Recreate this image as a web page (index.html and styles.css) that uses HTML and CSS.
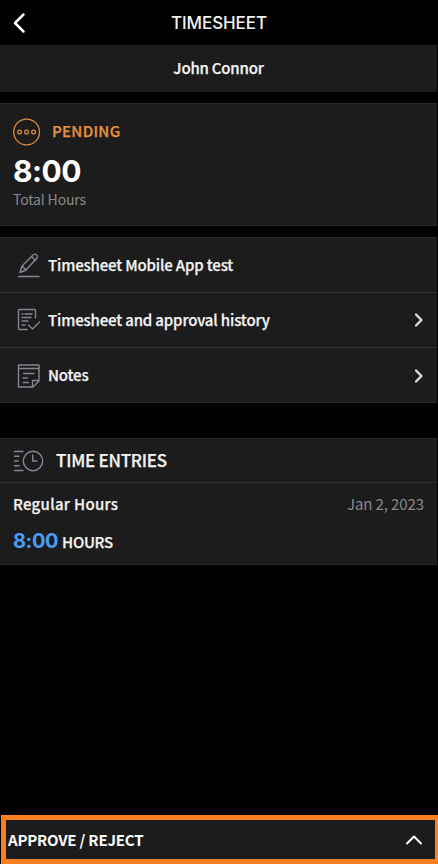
FILE: index.html
```html
<!DOCTYPE html>
<html lang="en">
<head>
<meta charset="utf-8">
<title>Timesheet</title>
<link rel="stylesheet" href="styles.css">
</head>
<body>
<div class="app">
  <header class="topbar">
    <svg class="back" width="14" height="22" viewBox="0 0 14 22"><path d="M11.500 2.500 3 11l8.500 8.500"/></svg>
    <h1 class="title">TIMESHEET</h1>
  </header>
  <div class="person">John Connor</div>
  <section class="card summary">
    <div class="status">
      <svg width="28" height="28" viewBox="0 0 28 28"><circle cx="13.600" cy="14" r="12.900"/><circle cx="6.600" cy="14" r="1.900"/><circle cx="13.600" cy="14" r="1.900"/><circle cx="20.600" cy="14" r="1.900"/></svg>
      <span class="pending">PENDING</span>
    </div>
    <div class="total">8:00</div>
    <div class="caption">Total Hours</div>
  </section>
  <nav class="card menu">
    <div class="row">
      <svg class="icon" width="24" height="26" viewBox="0 0 24 26"><path d="M1.500 24.500h20.500M3 20.500l2-6.500L16.500 2.500q1.500-1 3 .5t.5 3L9 18l-6 2.500zM5 14l4 4M14.500 4.500l4 4"/></svg>
      <span class="label l1">Timesheet Mobile App test</span>
    </div>
    <div class="row">
      <svg class="icon" width="24" height="26" viewBox="0 0 24 26"><path d="M10 22.500H2.500q-1 0-1-1v-18q0-1 1-1h15q1 0 1 1V11M5 7h1M8 7h7M5 10.500h9M5 14h6M5 18h3M11.500 18l4 4 7-7"/></svg>
      <span class="label l2">Timesheet and approval history</span>
      <svg class="chev" width="10" height="14" viewBox="0 0 10 14"><path d="m2 1.500 5.500 5.500L2 12.500"/></svg>
    </div>
    <div class="row">
      <svg class="icon" width="24" height="26" viewBox="0 0 24 26"><path d="M1.500 2h20.500v16l-6 6H1.500zM1.500 5.500H22M15.500 24v-6.500H22M6.500 10.500H17M6 15h4.500M6 19.500h5.500"/></svg>
      <span class="label l3">Notes</span>
      <svg class="chev" width="10" height="14" viewBox="0 0 10 14"><path d="m2 1.500 5.500 5.500L2 12.500"/></svg>
    </div>
  </nav>
  <section class="card entries">
    <div class="entries-head">
      <svg class="icon" width="32" height="24" viewBox="0 0 32 24"><circle cx="20" cy="12" r="9.700"/><path d="M19.700 6v6h4.300M1.500 2.500h8.500M1.500 7.200H6M1.500 12H5M1.500 16.800H6M1.500 21.500H10"/></svg>
      <h2 class="entries-title">TIME ENTRIES</h2>
    </div>
    <div class="entry">
      <div class="entry-top"><span class="kind">Regular Hours</span><span class="date">Jan 2, 2023</span></div>
      <div class="entry-hours"><span class="amount">8:00</span><span class="unit">HOURS</span></div>
    </div>
  </section>
  <footer class="action">
    <span class="action-label">APPROVE / REJECT</span>
    <svg class="up" width="18" height="12" viewBox="0 0 18 12"><path d="m2 9.500 7-7 7 7"/></svg>
  </footer>
</div>
</body>
</html>
```
FILE: styles.css
```css
* { box-sizing: border-box; }
body { margin: 0; background: #000; color: #f2f2f2; font-family: "Noto Sans CJK SC", sans-serif; font-weight: 500; }
svg { display: block; flex: none; fill: none; stroke-linecap: round; stroke-linejoin: round; }
h1, h2 { margin: 0; }
span, h1, h2, .person, .total, .caption { white-space: nowrap; }
.app { height: 864px; display: flex; flex-direction: column; overflow: hidden; }
.topbar { height: 45px; display: grid; grid-template-columns: 60px 1fr 60px; align-items: center; }
.back { margin-left: 12px; stroke: #fff; stroke-width: 2.5; }
.title { text-align: center; font: 500 17px/24px Inter, sans-serif; letter-spacing: -0.1px; }
.person { height: 47px; line-height: 46px; margin-right: 1px; text-align: center; background: #1c1c1c; font-size: 15px; letter-spacing: -0.2px; }
.person, .pending, .label, .entries-title, .kind, .unit { -webkit-text-stroke: 0.25px currentColor; }
.card { margin-right: 1px; background: #1c1c1c; border: solid #29292d; border-width: 1px 0; }
.summary { height: 123px; margin-top: 11px; padding: 14px 13px 0; }
.status { display: flex; align-items: center; gap: 11px; height: 28px; }
.status svg { stroke: #dc8b3c; stroke-width: 1.3; }
.pending { margin-top: -3px; color: #e5913f; font-size: 15px; letter-spacing: 0.3px; }
.total { height: 40px; margin-top: 5px; font: 700 30px/40px Inter, sans-serif; letter-spacing: -0.5px; color: #fff; }
.caption { margin-top: -1px; font-size: 14px; line-height: 18px; font-weight: 400; letter-spacing: -0.15px; color: #88888c; }
.menu { height: 166px; margin-top: 11px; }
.row { display: flex; align-items: center; height: 55px; padding: 0 13px 0 17px; border-bottom: 1px solid #303035; }
.row:last-child { border: 0; }
.icon { stroke: #818794; stroke-width: 1.4; }
.label { margin: -2px 0 0 7px; font-size: 15px; letter-spacing: -0.16px; }
.chev { margin-left: auto; stroke: #e1e3e8; stroke-width: 2.2; }
.entries { height: 127px; margin-top: 35px; }
.entries-head { height: 44px; display: flex; align-items: center; gap: 11px; padding-left: 13px; border-bottom: 1px solid #303035; }
.entries-title { margin-top: -2px; font-size: 17px; font-weight: 500; letter-spacing: -0.25px; }
.entry { padding: 9px 13px 0; }
.entry-top { display: flex; justify-content: space-between; height: 24px; line-height: 24px; font-size: 15px; }
.kind { letter-spacing: 0.3px; }
.date { font-weight: 400; letter-spacing: -0.1px; color: #88888c; }
.entry-hours { display: flex; align-items: baseline; gap: 4px; height: 28px; margin-top: 11px; line-height: 28px; }
.amount { color: #499df5; font: 700 20px/28px Inter, sans-serif; letter-spacing: -0.4px; }
.unit { font-size: 15px; letter-spacing: -0.3px; }
.action { height: 49px; margin: auto 0 0 1px; display: flex; align-items: center; justify-content: space-between; padding: 0 12px 0 2px; border: solid #fb8022; border-width: 5px 3px 5px 5px; background: #1c1c1c; color: #fff; font-size: 15px; font-weight: 700; letter-spacing: -0.2px; }
.up { stroke: #fff; stroke-width: 2; }
.action-label { margin-top: -1px; }
```
